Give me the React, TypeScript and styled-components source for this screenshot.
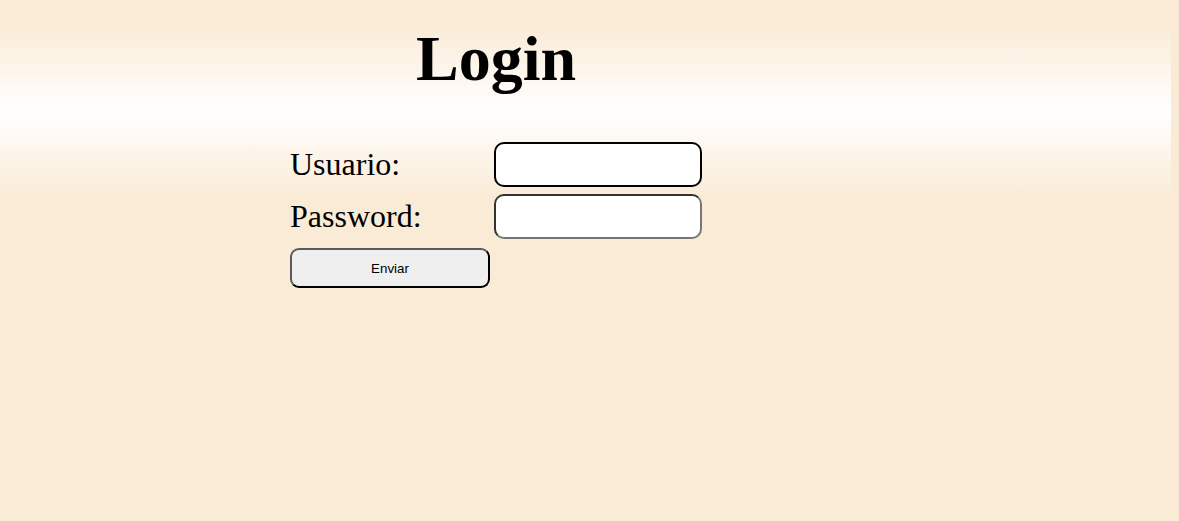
import React from "react";
import styled, { createGlobalStyle } from "styled-components";

const GlobalStyle = createGlobalStyle`
  html, body {
    margin: 0;
    padding: 0;
    background: #faebd7;
  }
  body {
    font-family: "Liberation Serif", "Times New Roman", serif;
  }
`;

const Page = styled.div`
  min-height: 521px;
  background:
    linear-gradient(#faebd7, #ffffff, #faebd7) 0 25px / 1171px 172px no-repeat,
    #faebd7;
  padding-top: 22px;
  box-sizing: border-box;
  overflow: hidden;
`;

const Panel = styled.div`
  width: 412px;
  margin-left: 290px;
  display: flex;
  flex-direction: column;
`;

const Title = styled.h1`
  margin: 0;
  font-family: "Liberation Serif", "Times New Roman", serif;
  font-size: 64px;
  line-height: 74px;
  font-weight: bold;
  text-align: center;
  color: #000;
`;

const Form = styled.form`
  margin-top: 46px;
  display: grid;
  grid-template-columns: 204px 208px;
  row-gap: 7px;
  align-items: center;
`;

const Label = styled.label`
  font-family: "Liberation Serif", "Times New Roman", serif;
  font-size: 32px;
  line-height: 37px;
  color: #000;
`;

const Input = styled.input<{ $focused?: boolean }>`
  box-sizing: border-box;
  width: 208px;
  height: 45px;
  border-radius: 10px;
  background: #fff;
  outline: none;
  padding: 0 8px;
  font-size: 16px;
  border: 2px solid;
  border-color: ${(p) => (p.$focused ? "#000 #000 #000 #000" : "#333 #767676 #767676 #333")};
`;

const Button = styled.button`
  grid-column: 1 / 2;
  margin-top: 2px;
  box-sizing: border-box;
  width: 200px;
  height: 40px;
  border-radius: 9px;
  background: #efefef;
  border: 2px solid;
  border-color: #5a5a5a #000 #000 #5a5a5a;
  font-family: "Liberation Sans", Arial, sans-serif;
  font-size: 13.33px;
  color: #000;
  padding: 0;
`;

export default function App() {
  return (
    <>
      <GlobalStyle />
      <Page>
        <Panel>
          <Title>Login</Title>
          <Form onSubmit={(e) => e.preventDefault()}>
            <Label htmlFor="usuario">Usuario:</Label>
            <Input id="usuario" type="text" $focused />
            <Label htmlFor="password">Password:</Label>
            <Input id="password" type="password" />
            <Button type="submit">Enviar</Button>
          </Form>
        </Panel>
      </Page>
    </>
  );
}
